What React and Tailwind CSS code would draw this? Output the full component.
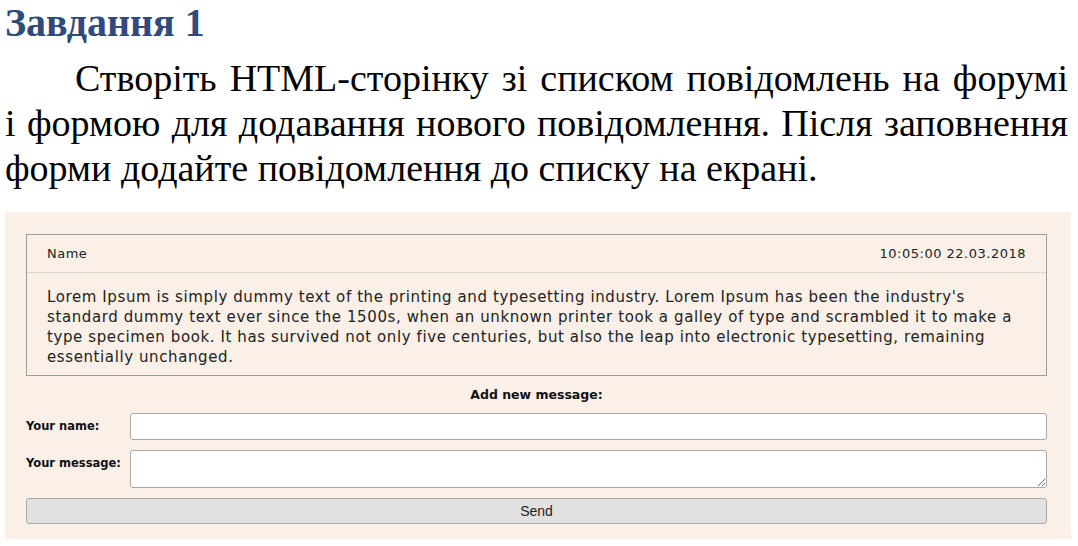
export default function App() {
    return (
        <div className="w-[1078px] h-[546px] bg-white overflow-hidden font-['Liberation_Serif',serif] text-black">
            <h2 className="pl-[5px] pt-[1px] text-[40px] leading-[43px] font-bold text-[#2f4a7b]">Завдання 1</h2>
            <div className="mt-[12px] pl-[5px] pr-[10px] text-[38px] leading-[45px]">
                <p className="pl-[70px] text-justify [text-align-last:justify]">Створіть HTML-сторінку зі списком повідомлень на форумі</p>
                <p className="text-justify [text-align-last:justify]">і формою для додавання нового повідомлення. Після заповнення</p>
                <p>форми додайте повідомлення до списку на екрані.</p>
            </div>

            <div className="mt-[21px] ml-[5px] w-[1066px] h-[327px] bg-[#faf0e8] pt-[22px] pl-[21px] pr-[24px] font-['DejaVu_Sans',sans-serif]">
                {/* forum message */}
                <div className="border border-[#9c9c9c]">
                    <div className="flex justify-between items-center h-[38px] px-[20px] border-b border-dotted border-[#bdbdbd] text-[13px] tracking-[0.5px] text-[#222]">
                        <span>Name</span>
                        <span>10:05:00 22.03.2018</span>
                    </div>
                    <p className="pt-[14px] pb-[8px] px-[20px] text-[15px] tracking-[0.6px] leading-[20px] text-[#222] whitespace-nowrap">
                        Lorem Ipsum is simply dummy text of the printing and typesetting industry. Lorem Ipsum has been the industry's<br />
                        standard dummy text ever since the 1500s, when an unknown printer took a galley of type and scrambled it to make a<br />
                        type specimen book. It has survived not only five centuries, but also the leap into electronic typesetting, remaining<br />
                        essentially unchanged.
                    </p>
                </div>

                {/* add form */}
                <div className="mt-[11px] text-center text-[12.5px] leading-[16px] font-bold text-[#111]">Add new message:</div>
                <div className="mt-[10px] flex items-center">
                    <label className="w-[104px] shrink-0 text-[11.5px] font-bold text-[#111]">Your name:</label>
                    <input className="flex-1 h-[27px] bg-white border border-[#a9a9a9] rounded-[3px]" />
                </div>
                <div className="mt-[10px] flex items-start">
                    <label className="w-[104px] shrink-0 pt-[5px] text-[11.5px] font-bold text-[#111]">Your message:</label>
                    <textarea className="flex-1 h-[38px] bg-white border border-[#a9a9a9] rounded-[3px] resize-y" />
                </div>
                <button className="mt-[10px] w-full h-[26px] bg-[#e1e1e1] border border-[#a9a9a9] rounded-[3px] text-[14px] text-[#222] font-['Liberation_Sans',sans-serif]">
                    Send
                </button>
            </div>
        </div>
    );
}
